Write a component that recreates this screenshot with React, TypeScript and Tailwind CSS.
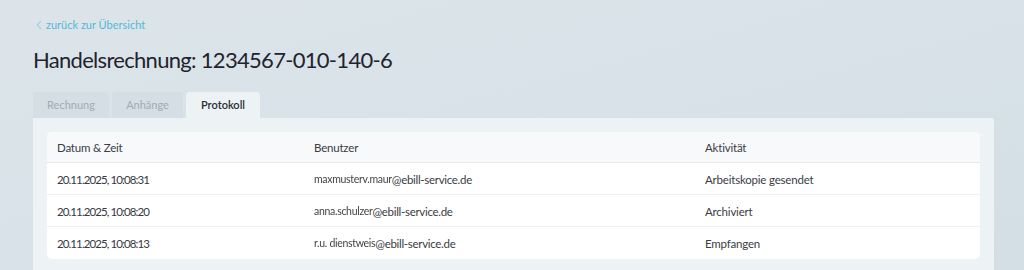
import React from "react";

const rows = [
  { date: "20.11.2025, 10:08:31", user: "maxmusterv.maur", act: "Arbeitskopie gesendet" },
  { date: "20.11.2025, 10:08:20", user: "anna.schulzer", act: "Archiviert" },
  { date: "20.11.2025, 10:08:13", user: "r.u. dienstweis", act: "Empfangen" },
];

export default function App() {
  return (
    <div
      className="w-[1024px] h-[270px] overflow-hidden bg-gradient-to-br from-[#dce4e9] via-[#d8e2e8] to-[#d3dfe5] text-[#252733]"
      style={{ fontFamily: "Lato, 'Noto Sans', sans-serif" }}
    >
      <div className="pl-[33px] pt-[17px]">
        <a className="flex items-center gap-[3px] text-[11px] leading-[16px] text-[#52b9d8] pl-[3px]">
          <svg width="7" height="10" viewBox="0 0 7 10" fill="none" stroke="#8fd0e4" strokeWidth="1.1">
            <path d="M5 1 L1.5 5 L5 9" />
          </svg>
          <span>zurück zur Übersicht</span>
        </a>
        <h1 className="mt-[14px] text-[22px] leading-[26px] tracking-[-0.7px] text-[#22232e]">
          Handelsrechnung: 1234567-010-140-6
        </h1>
        <div className="mt-[19px] flex gap-[3px] text-[11px] leading-[26px]">
          <div className="w-[76px] h-[26px] rounded-t-[4px] bg-[#d5dee4] text-[#a3abb2] text-center">Rechnung</div>
          <div className="w-[71px] h-[26px] rounded-t-[4px] bg-[#d5dee4] text-[#a3abb2] text-center">Anhänge</div>
          <div className="w-[74px] h-[26px] rounded-t-[4px] bg-[#edf2f5] text-[#2b2d36] font-semibold text-center">Protokoll</div>
        </div>
        <div className="w-[961px] h-[160px] bg-[#edf2f5] rounded-tr-[3px] px-[14px] pt-[14px]">
          <div className="bg-white rounded-[5px] overflow-hidden text-[11.5px] tracking-[-0.2px] text-[#3a3c45]">
            <div className="flex h-[31px] pt-[1px] items-center bg-[#f7f9fa] border-b border-[#e6ebee]">
              <div className="w-[267px] pl-[10px]">Datum &amp; Zeit</div>
              <div className="w-[391px]">Benutzer</div>
              <div>Aktivität</div>
            </div>
            {rows.map((r, i) => (
              <div
                key={i}
                className={`flex h-[32px] pt-[2px] items-center ${i < rows.length - 1 ? "border-b border-[#eef1f3]" : ""}`}
              >
                <div className="w-[267px] pl-[10px] text-[#373942] tracking-[-0.9px]">{r.date}</div>
                <div className="w-[391px] flex items-center">
                  <span className="whitespace-nowrap blur-[0.6px] text-[#444] text-[10.5px] tracking-[-0.3px]">{r.user}</span>
                  <span className="tracking-[-0.3px]">@ebill-service.de</span>
                </div>
                <div>{r.act}</div>
              </div>
            ))}
          </div>
        </div>
      </div>
    </div>
  );
}
